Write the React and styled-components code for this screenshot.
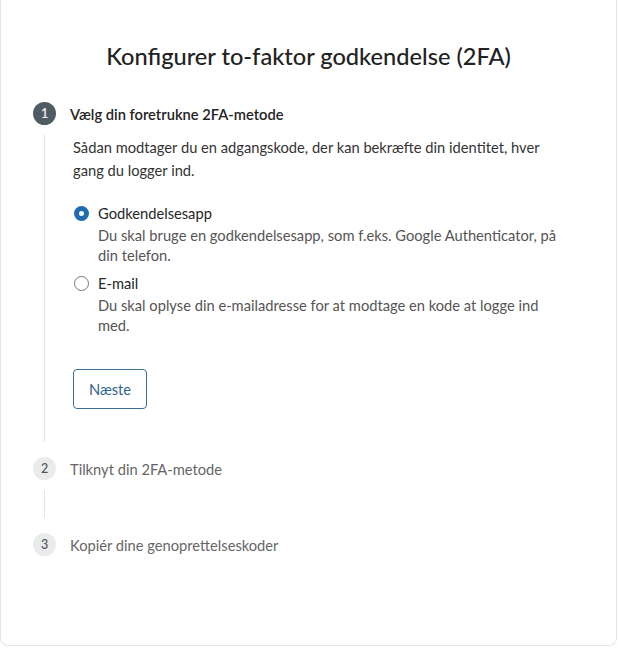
import React, { useState } from "react";
import styled, { createGlobalStyle } from "styled-components";

const GlobalStyle = createGlobalStyle`
  html, body {
    margin: 0;
    padding: 0;
    background: #ffffff;
  }
  body {
    font-family: Lato, "Noto Sans", sans-serif;
    color: #262626;
  }
`;

const Card = styled.div`
  box-sizing: border-box;
  width: 617px;
  height: 646px;
  border: 1px solid #e4e4e4;
  border-top: none;
  border-radius: 0 0 8px 8px;
  background: #fff;
  padding: 41px 32px 0 32px;
`;

const Title = styled.h1`
  margin: 0 0 31px;
  font-size: 23.6px;
  line-height: 30px;
  font-weight: 500;
  text-align: center;
  color: #222;
`;

const Step = styled.div`
  display: grid;
  grid-template-columns: 23px 1fr;
  column-gap: 14px;
  margin-bottom: ${(p) => (p.$last ? "0" : "15px")};
`;

const Badge = styled.div`
  width: 23px;
  height: 23px;
  border-radius: 50%;
  display: flex;
  align-items: center;
  justify-content: center;
  font-size: 12.5px;
  font-weight: 500;
  background: ${(p) => (p.$active ? "#505c63" : "#e9ebec")};
  color: ${(p) => (p.$active ? "#fff" : "#555")};
`;

const StepLabel = styled.div`
  display: flex;
  align-items: center;
  font-size: 14.7px;
  font-weight: ${(p) => (p.$active ? 600 : 400)};
  color: ${(p) => (p.$active ? "#242424" : "#666")};
`;

const Rail = styled.div`
  display: flex;
  justify-content: center;
  padding-top: 10px;
  &::before {
    content: "";
    width: 1px;
    background: #e3e3e3;
  }
`;

const Body = styled.div`
  padding: ${(p) => (p.$empty ? "0" : "11px 0 33px 3px")};
  min-height: ${(p) => (p.$empty ? "38px" : "0")};
`;

const Intro = styled.p`
  margin: 0 0 20px;
  font-size: 14.7px;
  line-height: 23px;
  color: #333;
  max-width: 480px;
`;

const Options = styled.div`
  display: flex;
  flex-direction: column;
  gap: 7px;
  margin-bottom: 34px;
`;

const Option = styled.label`
  display: grid;
  grid-template-columns: 15px 1fr;
  column-gap: 9px;
  padding-left: 1px;
  cursor: pointer;
`;

const Radio = styled.span`
  box-sizing: border-box;
  width: 15px;
  height: 15px;
  margin-top: 4px;
  border-radius: 50%;
  border: ${(p) => (p.$checked ? "5px solid #1f6db0" : "1px solid #777")};
  background: #fff;
`;

const OptionTitle = styled.div`
  font-size: 14.7px;
  line-height: 22px;
  color: #262626;
`;

const OptionDesc = styled.div`
  margin-top: 2px;
  font-size: 14.7px;
  line-height: 19.5px;
  color: #555;
  max-width: 470px;
`;

const Button = styled.button`
  font-family: inherit;
  font-size: 14.7px;
  color: #2f6591;
  background: #fff;
  border: 1px solid #3a6d94;
  border-radius: 4px;
  width: 74px;
  height: 40px;
  cursor: pointer;
`;

const options = [
  {
    id: "app",
    title: "Godkendelsesapp",
    desc: "Du skal bruge en godkendelsesapp, som f.eks. Google Authenticator, på din telefon.",
  },
  {
    id: "email",
    title: "E-mail",
    desc: "Du skal oplyse din e-mailadresse for at modtage en kode at logge ind med.",
  },
];

export default function App() {
  const [method, setMethod] = useState("app");
  return (
    <>
      <GlobalStyle />
      <Card>
        <Title>Konfigurer to-faktor godkendelse (2FA)</Title>

        <Step>
          <Badge $active>1</Badge>
          <StepLabel $active>Vælg din foretrukne 2FA-metode</StepLabel>
          <Rail />
          <Body>
            <Intro>
              Sådan modtager du en adgangskode, der kan bekræfte din identitet,
              hver gang du logger ind.
            </Intro>
            <Options>
              {options.map((o) => (
                <Option key={o.id} onClick={() => setMethod(o.id)}>
                  <Radio $checked={method === o.id} />
                  <div>
                    <OptionTitle>{o.title}</OptionTitle>
                    <OptionDesc>{o.desc}</OptionDesc>
                  </div>
                </Option>
              ))}
            </Options>
            <Button>Næste</Button>
          </Body>
        </Step>

        <Step>
          <Badge>2</Badge>
          <StepLabel>Tilknyt din 2FA-metode</StepLabel>
          <Rail />
          <Body $empty />
        </Step>

        <Step $last>
          <Badge>3</Badge>
          <StepLabel>Kopiér dine genoprettelseskoder</StepLabel>
        </Step>
      </Card>
    </>
  );
}
